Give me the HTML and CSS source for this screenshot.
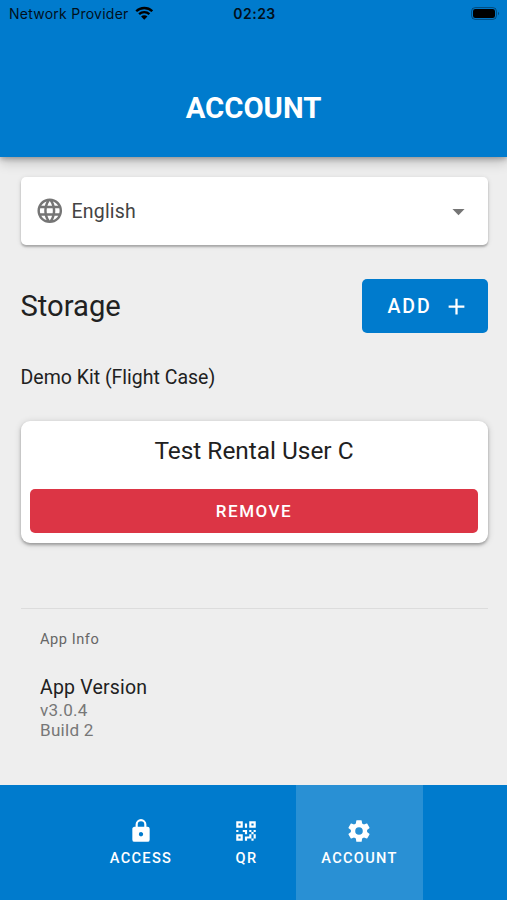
FILE: index.html
```html
<!DOCTYPE html>
<html lang="en">
<head>
<meta charset="utf-8">
<title>Account</title>
<link rel="stylesheet" href="styles.css">
</head>
<body>
<div class="app">
  <header class="header">
    <div class="status">
      <div class="carrier"><span>Network Provider</span>
        <svg class="wifi" viewBox="0 0 18 14"><path d="M1.2 5.1a11.2 11.2 0 0 1 15.6 0M4 8a7.2 7.2 0 0 1 10 0" fill="none" stroke="currentColor" stroke-width="2.3"/><path d="M9 13.4 5.9 10.3a4.4 4.4 0 0 1 6.2 0z" fill="currentColor"/></svg>
      </div>
      <div class="clock">02:23</div>
      <svg class="battery" viewBox="0 0 29 13"><rect x=".6" y=".6" width="24.8" height="11.8" rx="3.6" fill="none" stroke="#000" stroke-opacity=".4"/><rect x="2" y="2" width="22" height="9" rx="2.3"/><path d="M27 4.7a2.1 2.1 0 0 1 0 3.6z" opacity=".4"/></svg>
    </div>
    <h1 class="title">ACCOUNT</h1>
  </header>
  <main class="content">
    <div class="select">
      <svg class="globe" viewBox="0 0 24 24"><path d="M16.36,14C16.44,13.34 16.5,12.68 16.5,12C16.5,11.32 16.44,10.66 16.36,10H19.74C19.9,10.64 20,11.31 20,12C20,12.69 19.9,13.36 19.74,14M14.59,19.56C15.19,18.45 15.65,17.25 15.97,16H18.92C17.96,17.65 16.43,18.93 14.59,19.56M14.34,14H9.66C9.56,13.34 9.5,12.68 9.5,12C9.5,11.32 9.56,10.65 9.66,10H14.34C14.43,10.65 14.5,11.32 14.5,12C14.5,12.68 14.43,13.34 14.34,14M12,19.96C11.17,18.76 10.5,17.43 10.09,16H13.91C13.5,17.43 12.83,18.76 12,19.96M8,8H5.08C6.03,6.34 7.57,5.06 9.4,4.44C8.8,5.55 8.35,6.75 8,8M5.08,16H8C8.35,17.25 8.8,18.45 9.4,19.56C7.57,18.93 6.03,17.65 5.08,16M4.26,14C4.1,13.36 4,12.69 4,12C4,11.31 4.1,10.64 4.26,10H7.64C7.56,10.66 7.5,11.32 7.5,12C7.5,12.68 7.56,13.34 7.64,14M12,4.03C12.83,5.23 13.5,6.57 13.91,8H10.09C10.5,6.57 11.17,5.23 12,4.03M18.92,8H15.97C15.65,6.75 15.19,5.55 14.59,4.44C16.43,5.07 17.96,6.34 18.92,8M12,2C6.47,2 2,6.5 2,12A10,10 0 0,0 12,22A10,10 0 0,0 22,12A10,10 0 0,0 12,2Z"/></svg>
      <span class="language">English</span>
      <svg class="caret" viewBox="0 0 24 24"><path d="M7,10L12,15L17,10H7Z"/></svg>
    </div>
    <div class="storage">
      <h2 class="heading">Storage</h2>
      <button class="add"><span>ADD</span><svg class="plus" viewBox="0 0 24 24"><path d="M19,13H13V19H11V13H5V11H11V5H13V11H19V13Z"/></svg></button>
    </div>
    <p class="kit">Demo Kit (Flight Case)</p>
    <section class="card">
      <div class="user">Test Rental User C</div>
      <button class="remove">REMOVE</button>
    </section>
    <section class="info">
      <div class="subheader">App Info</div>
      <div class="version">App Version</div>
      <div class="detail">v3.0.4</div>
      <div class="detail">Build 2</div>
    </section>
  </main>
  <nav class="nav">
    <a class="tab access"><svg viewBox="0 0 24 24"><path d="M12,17A2,2 0 0,0 14,15C14,13.89 13.1,13 12,13A2,2 0 0,0 10,15A2,2 0 0,0 12,17M18,8A2,2 0 0,1 20,10V20A2,2 0 0,1 18,22H6A2,2 0 0,1 4,20V10C4,8.89 4.9,8 6,8H7V6A5,5 0 0,1 12,1A5,5 0 0,1 17,6V8H18M12,3A3,3 0 0,0 9,6V8H15V6A3,3 0 0,0 12,3Z"/></svg><span>ACCESS</span></a>
    <a class="tab qr"><svg viewBox="0 0 24 24"><path d="M3,11H5V13H3V11M11,5H13V9H11V5M9,11H13V15H11V13H9V11M15,11H17V13H19V11H21V13H19V15H21V19H19V21H17V19H13V21H11V17H15V15H17V13H15V11M19,19V15H17V19H19M15,3H21V9H15V3M17,5V7H19V5H17M3,3H9V9H3V3M5,5V7H7V5H5M3,15H9V21H3V15M5,17V19H7V17H5Z"/></svg><span>QR</span></a>
    <a class="tab account"><svg viewBox="0 0 24 24"><path d="M12,15.5A3.5,3.5 0 0,1 8.5,12A3.5,3.5 0 0,1 12,8.5A3.5,3.5 0 0,1 15.5,12A3.5,3.5 0 0,1 12,15.5M19.43,12.97C19.47,12.65 19.5,12.33 19.5,12C19.5,11.67 19.47,11.34 19.43,11L21.54,9.37C21.73,9.22 21.78,8.95 21.66,8.73L19.66,5.27C19.54,5.05 19.27,4.96 19.05,5.05L16.56,6.05C16.04,5.66 15.5,5.32 14.87,5.07L14.5,2.42C14.46,2.18 14.25,2 14,2H10C9.75,2 9.54,2.18 9.5,2.42L9.13,5.07C8.5,5.32 7.96,5.66 7.44,6.05L4.95,5.05C4.73,4.96 4.46,5.05 4.34,5.27L2.34,8.73C2.21,8.95 2.27,9.22 2.46,9.37L4.57,11C4.53,11.34 4.5,11.67 4.5,12C4.5,12.33 4.53,12.65 4.57,12.97L2.46,14.63C2.27,14.78 2.21,15.05 2.34,15.27L4.34,18.73C4.46,18.95 4.73,19.03 4.95,18.95L7.44,17.94C7.96,18.34 8.5,18.68 9.13,18.93L9.5,21.58C9.54,21.82 9.75,22 10,22H14C14.25,22 14.46,21.82 14.5,21.58L14.87,18.93C15.5,18.67 16.04,18.34 16.56,17.94L19.05,18.95C19.27,19.03 19.54,18.95 19.66,18.73L21.66,15.27C21.78,15.05 21.73,14.78 21.54,14.63L19.43,12.97Z"/></svg><span>ACCOUNT</span></a>
  </nav>
</div>
</body>
</html>
```
FILE: styles.css
```css
* { box-sizing: border-box; }
body { margin: 0; font-family: Roboto, sans-serif; color: #212121; background: #eee; }
h1, h2, p { margin: 0; font-weight: 400; }
button { border: 0; padding: 0; font-family: inherit; color: #fff; }
svg { display: block; flex: none; fill: currentColor; }
.app { height: 900px; display: flex; flex-direction: column; overflow: hidden; }

.header {
  height: 157px;
  flex: none;
  background: #007bcd;
  box-shadow: 0 2px 5px rgba(0,0,0,.25), 0 5px 12px rgba(0,0,0,.2);
}
.status {
  height: 26px;
  padding: 0 7px 0 9px;
  display: grid;
  grid-template-columns: 1fr auto 1fr;
  align-items: center;
  font-family: Inter, sans-serif;
  font-size: 14px;
  color: #00101c;
}
.carrier { display: flex; align-items: center; gap: 6px; letter-spacing: .25px; white-space: nowrap; }
.wifi { width: 18.5px; height: 14.4px; color: #000; }
.clock { font-weight: 600; letter-spacing: .5px; }
.battery { width: 29px; height: 13px; justify-self: end; fill: #000; }
.title {
  margin-top: 62px;
  line-height: 40px;
  text-align: center;
  font-size: 29.3px;
  font-weight: 700;
  color: #fff;
}

.content { flex: 1; padding: 20px 19.5px 0 20.5px; }
.select {
  height: 68px;
  padding: 0 15px 0 14.5px;
  display: flex;
  align-items: center;
  background: #fff;
  border-radius: 5px;
  box-shadow: 0 2px 2px rgba(0,0,0,.23), 0 1px 5px rgba(0,0,0,.13);
}
.globe { width: 29.5px; height: 29.5px; color: #757575; }
.language { margin-left: 7px; flex: 1; font-size: 19.5px; color: #444; letter-spacing: .2px; }
.caret { width: 29px; height: 29px; color: #757575; }
.storage { margin-top: 34px; height: 54px; display: flex; align-items: center; justify-content: space-between; }
.heading { font-size: 29.2px; }
.add {
  width: 126px;
  height: 54px;
  display: flex;
  align-items: center;
  padding-left: 26px;
  gap: 11px;
  background: #007bcd;
  border-radius: 5px;
  font-size: 19.5px;
  font-weight: 500;
  letter-spacing: 1.9px;
}
.plus { width: 27px; height: 27px; }
.kit { margin-top: 30px; line-height: 30px; font-size: 19.5px; }
.card {
  margin-top: 28px;
  height: 122px;
  padding: 9px 9.5px;
  background: #fff;
  border-radius: 9px;
  box-shadow: 0 2px 3px rgba(0,0,0,.28), 0 1px 7px rgba(0,0,0,.16);
}
.user { height: 59px; line-height: 42px; text-align: center; font-size: 24.4px; }
.remove {
  display: block;
  width: 100%;
  height: 44px;
  background: #dc3545;
  border-radius: 5px;
  font-size: 17px;
  font-weight: 500;
  letter-spacing: 1.5px;
}
.info { margin-top: 65px; padding: 20px 19.5px 0; border-top: 1px solid #dcdcdc; }
.subheader { line-height: 20px; font-size: 14.6px; color: #666; letter-spacing: .55px; }
.version { margin-top: 26px; line-height: 26px; font-size: 19.5px; letter-spacing: .2px; }
.detail { line-height: 19.5px; font-size: 17.1px; color: #777; letter-spacing: .25px; }

.nav { height: 115px; flex: none; display: flex; justify-content: center; background: #007bcd; }
.tab {
  display: flex;
  flex-direction: column;
  align-items: center;
  justify-content: center;
  gap: 5px;
  color: #fff;
  font-size: 14.6px;
  font-weight: 500;
  letter-spacing: 1.3px;
}
.tab span { padding-left: 1px; }
.tab svg { width: 26px; height: 26px; }
.access { width: 112px; }
.qr { width: 99px; }
.account { width: 127px; background: #2990d4; }
```
